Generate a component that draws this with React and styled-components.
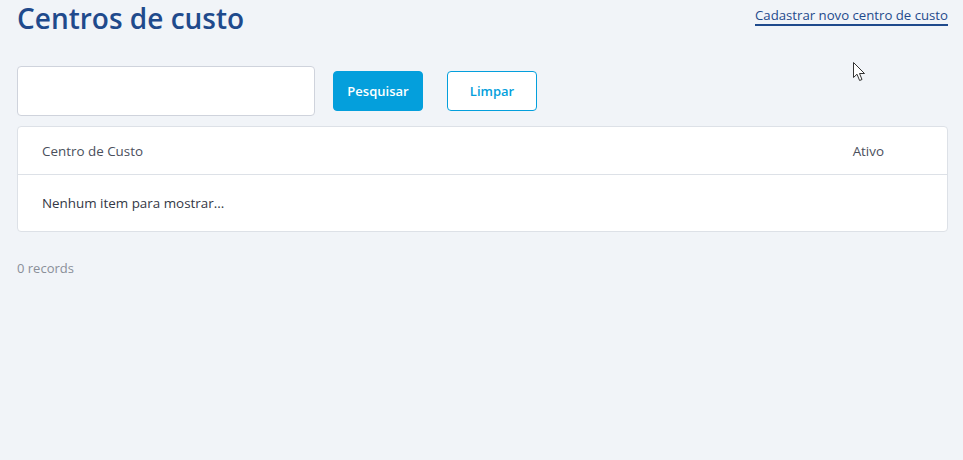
import React from "react";
import styled, { createGlobalStyle } from "styled-components";

const GlobalStyle = createGlobalStyle`
  html, body {
    margin: 0;
    padding: 0;
    background: #f1f4f8;
    font-family: "Open Sans", "Noto Sans", sans-serif;
  }
`;

const Page = styled.main`
  position: relative;
  min-height: 460px;
  padding: 0 15px 0 17px;
  box-sizing: border-box;
`;

const Header = styled.header`
  display: flex;
  justify-content: space-between;
  align-items: flex-start;
  height: 66px;
`;

const Title = styled.h1`
  margin: 0;
  padding-top: 1px;
  font-size: 28px;
  font-weight: 600;
  line-height: 34px;
  color: #1f4a8c;
`;

const NewLink = styled.a`
  margin-top: 6px;
  font-size: 13.2px;
  line-height: 18px;
  color: #1f4a8c;
  text-decoration: none;
  border-bottom: 2px solid #1f4a8c;
  cursor: pointer;
`;

const SearchRow = styled.div`
  display: flex;
  align-items: center;
  gap: 18px;
  height: 50px;
  margin-bottom: 10px;
`;

const SearchInput = styled.input`
  width: 298px;
  height: 50px;
  box-sizing: border-box;
  border: 1px solid #cfd3dc;
  border-radius: 4px;
  background: #fff;
  outline: none;
  font: inherit;
  padding: 0 12px;
`;

const Button = styled.button`
  width: 90px;
  height: 40px;
  border-radius: 4px;
  font-family: inherit;
  font-size: 13px;
  font-weight: 600;
  cursor: pointer;
  border: 1px solid #049fdc;
  background: ${(p) => (p.$outline ? "#fff" : "#049fdc")};
  color: ${(p) => (p.$outline ? "#049fdc" : "#fff")};
  margin-left: ${(p) => (p.$outline ? "6px" : "0")};
`;

const Card = styled.section`
  background: #fff;
  border: 1px solid #dde1e7;
  border-radius: 4px;
`;

const Row = styled.div`
  display: flex;
  align-items: center;
  justify-content: space-between;
  height: ${(p) => (p.$head ? "47px" : "56px")};
  padding: 0 63px 0 24px;
  border-bottom: ${(p) => (p.$head ? "1px solid #dde1e7" : "none")};
  font-size: 13.4px;
  color: ${(p) => (p.$head ? "#4a4f5c" : "#333845")};
`;

const Footer = styled.div`
  margin-top: 27px;
  font-size: 13px;
  color: #8a8f98;
`;

const Cursor = styled.svg`
  position: absolute;
  left: 853px;
  top: 62px;
`;

export default function App() {
  return (
    <>
      <GlobalStyle />
      <Page>
        <Header>
          <Title>Centros de custo</Title>
          <NewLink>Cadastrar novo centro de custo</NewLink>
        </Header>
        <SearchRow>
          <SearchInput type="text" />
          <Button>Pesquisar</Button>
          <Button $outline>Limpar</Button>
        </SearchRow>
        <Card>
          <Row $head>
            <span>Centro de Custo</span>
            <span>Ativo</span>
          </Row>
          <Row>
            <span>Nenhum item para mostrar...</span>
          </Row>
        </Card>
        <Footer>0 records</Footer>
        <Cursor width="13" height="20" viewBox="0 0 13 20">
          <path
            d="M0.5 0.5 L0.5 15.5 L4 12.2 L6.6 18.5 L9 17.5 L6.5 11.5 L11.5 11.5 Z"
            fill="#fff"
            stroke="#333"
            strokeWidth="1"
            strokeLinejoin="round"
          />
        </Cursor>
      </Page>
    </>
  );
}
